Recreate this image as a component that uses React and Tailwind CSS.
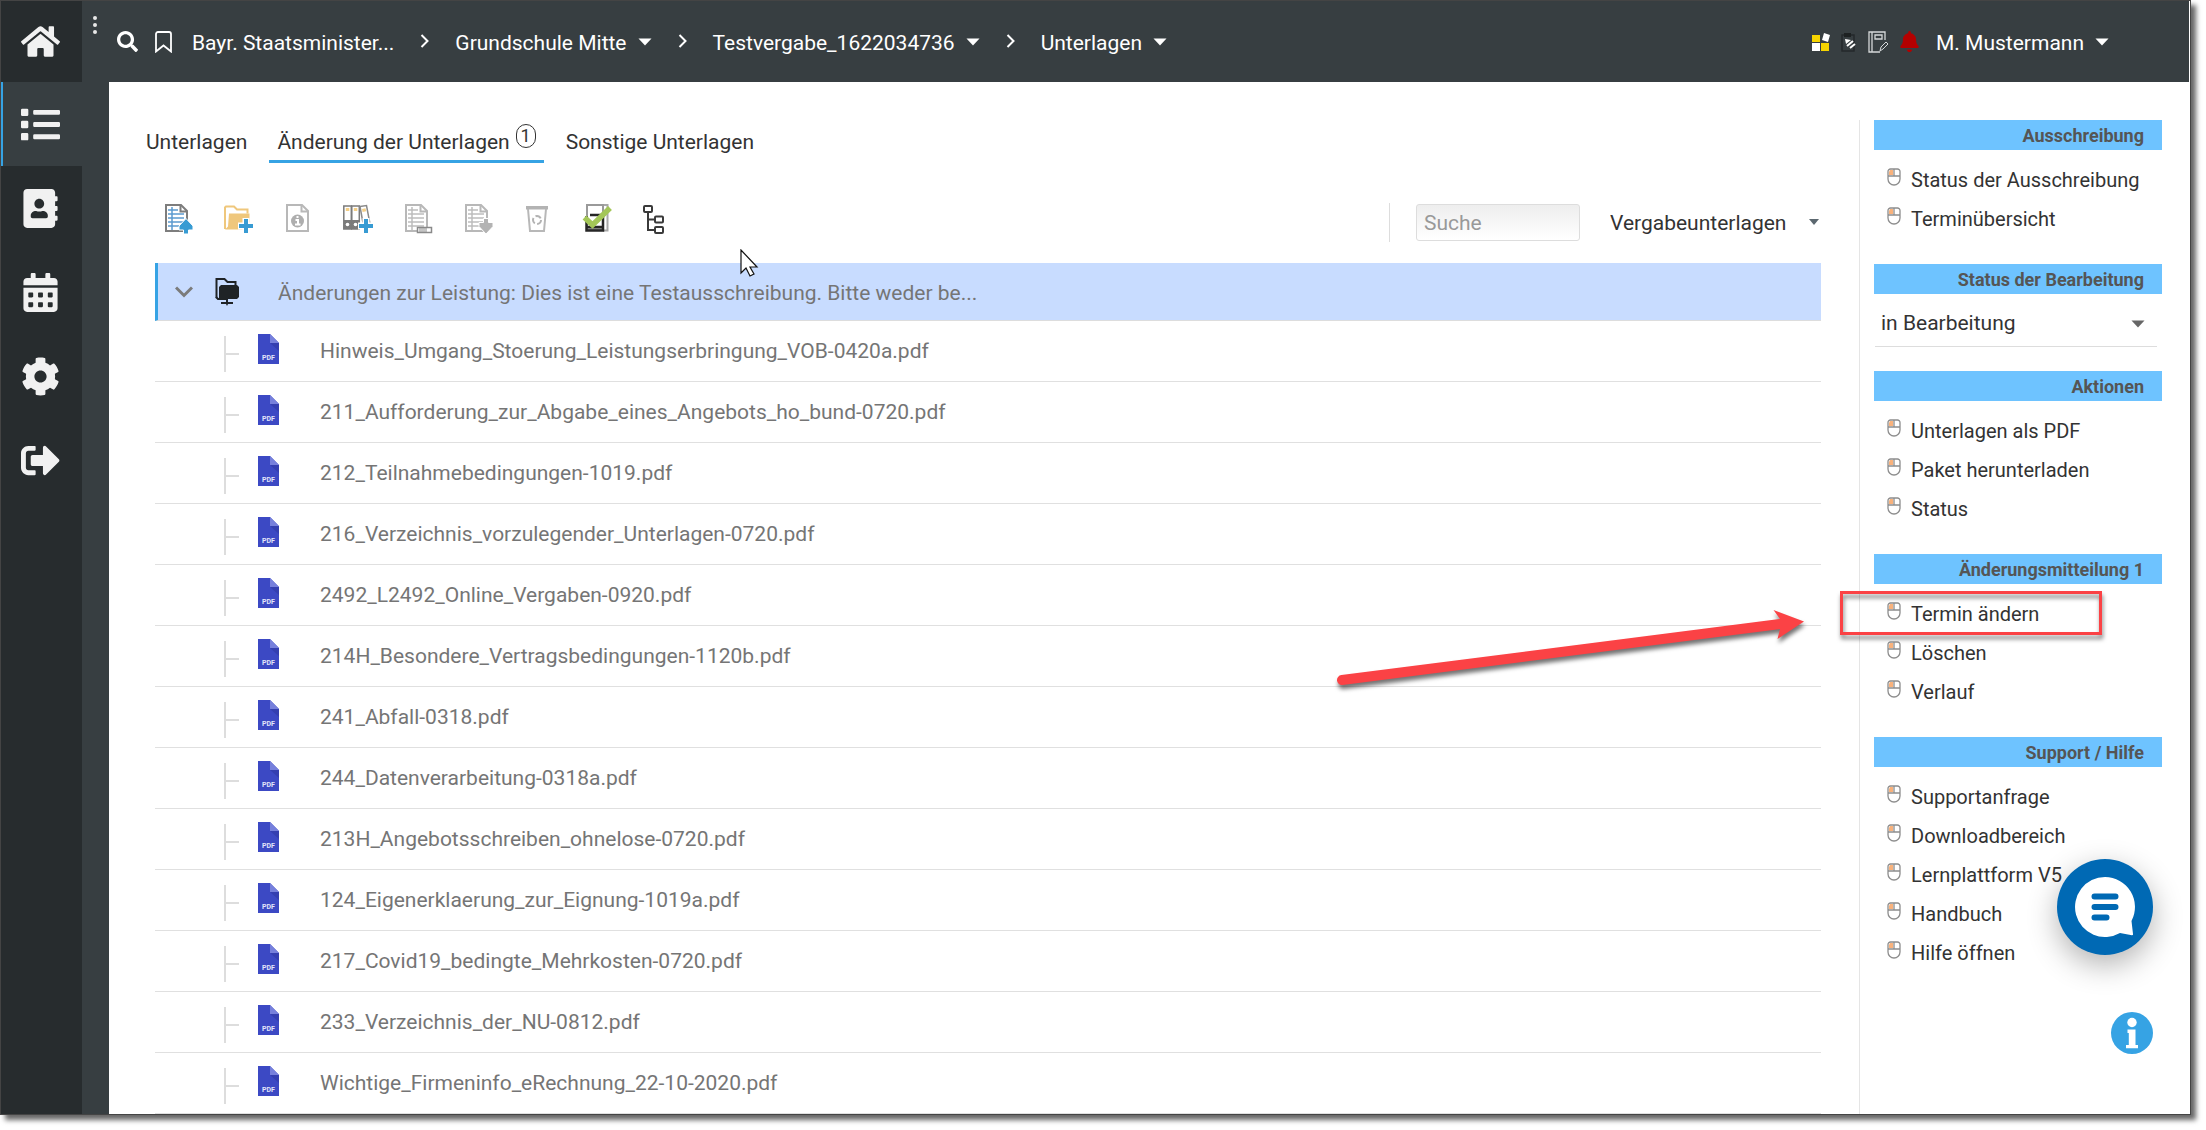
import React from "react";
import {
  FaHome,
  FaList,
  FaAddressBook,
  FaCalendarAlt,
  FaCog,
  FaSignOutAlt,
  FaSearch,
  FaBell,
} from "react-icons/fa";

const navItems = [
  { label: "Start", Icon: FaHome },
  { label: "Liste", Icon: FaList, active: true },
  { label: "Kontakte", Icon: FaAddressBook },
  { label: "Kalender", Icon: FaCalendarAlt },
  { label: "Einstellungen", Icon: FaCog },
  { label: "Abmelden", Icon: FaSignOutAlt },
];

const files = [
  "Hinweis_Umgang_Stoerung_Leistungserbringung_VOB-0420a.pdf",
  "211_Aufforderung_zur_Abgabe_eines_Angebots_ho_bund-0720.pdf",
  "212_Teilnahmebedingungen-1019.pdf",
  "216_Verzeichnis_vorzulegender_Unterlagen-0720.pdf",
  "2492_L2492_Online_Vergaben-0920.pdf",
  "214H_Besondere_Vertragsbedingungen-1120b.pdf",
  "241_Abfall-0318.pdf",
  "244_Datenverarbeitung-0318a.pdf",
  "213H_Angebotsschreiben_ohnelose-0720.pdf",
  "124_Eigenerklaerung_zur_Eignung-1019a.pdf",
  "217_Covid19_bedingte_Mehrkosten-0720.pdf",
  "233_Verzeichnis_der_NU-0812.pdf",
  "Wichtige_Firmeninfo_eRechnung_22-10-2020.pdf",
];

function Caret({ className = "" }) {
  return (
    <svg className={className} width="14" height="8" viewBox="0 0 14 8" aria-hidden="true">
      <path d="M0.5 0.5h13L7 7.5z" fill="currentColor" />
    </svg>
  );
}

function Separator() {
  return (
    <svg width="9" height="14" viewBox="0 0 9 14" fill="none" stroke="white" strokeWidth="2" className="-mt-[4px]" aria-hidden="true">
      <path d="M1.5 1l6 6-6 6" />
    </svg>
  );
}

function PageLines({ stroke, line }) {
  return (
    <g fill="none">
      <path d="M4 4h15l6 6v20H4z" fill="#fff" stroke={stroke} strokeWidth="2" />
      <path d="M18.5 4v6.5H25" stroke={stroke} strokeWidth="2" />
      <path d="M6 9h10M6 13h16M6 17h16M6 21h16M6 25h16M10 6v23" stroke={line} strokeWidth="1.5" />
    </g>
  );
}

function IconFrame({ children }) {
  return (
    <svg width="32" height="34" viewBox="0 0 32 34" aria-hidden="true">
      {children}
    </svg>
  );
}

function Plus() {
  return (
    <g fill="none">
      <path d="M24 17v15M16 25h15" stroke="#fff" strokeWidth="7" />
      <path d="M24 18v14M17 25h14" stroke="#379bd3" strokeWidth="4" />
    </g>
  );
}

function Binder({ x }) {
  return (
    <g>
      <path d={`M${x} 5h7.5v23h-7.5z`} fill="#fff" stroke="#7b7b7b" strokeWidth="1.5" />
      <path d={`M${x} 19h7.5v9h-7.5z`} fill="#7b7b7b" />
      <path d={`M${x + 2} 7h3.5v3h-3.5z`} fill="#f4cf87" />
      <circle cx={x + 3.7} cy="23.5" r="1.8" fill="#fff" />
    </g>
  );
}

const tools = [
  {
    label: "Dokument hochladen",
    icon: (
      <>
        <PageLines stroke="#7d7d7d" line="#5b9bd0" />
        <path d="M24 17.5l7 7.500v4h-4.500v4h-5v-4H17v-4z" fill="#379bd3" stroke="#fff" />
      </>
    ),
  },
  {
    label: "Ordner anlegen",
    icon: (
      <>
        <path d="M3 28V6.500l1-1h8l3 3h10.500v4" fill="none" stroke="#efc77c" strokeWidth="2" />
        <path d="M7 12.500h20.500V27l-1 1.500H3l3-3z" fill="#efc77c" />
        <Plus />
      </>
    ),
  },
  {
    label: "Informationen",
    icon: (
      <>
        <path d="M5 4h15l6 6v20H5z" fill="#fff" stroke="#b8b8b8" strokeWidth="2" />
        <path d="M19.500 4v6.500H26" fill="none" stroke="#b8b8b8" strokeWidth="2" />
        <circle cx="15.500" cy="20" r="6.500" fill="#aeaeae" />
        <path d="M13.500 19h2.500v4M13 23.500h5.500M14.500 16h2" stroke="#fff" strokeWidth="2" fill="none" />
      </>
    ),
  },
  {
    label: "Vergabeordner hinzufügen",
    icon: (
      <>
        <Binder x={1.8} />
        <Binder x={9.8} />
        <path d="M18 5.500l6.500-1 4 21-6.500 2z" fill="#fff" stroke="#8a8a8a" strokeWidth="1.500" />
        <path d="M20 8l3.500-.8.6 3-3.500.8z" fill="#f4cf87" />
        <Plus />
      </>
    ),
  },
  {
    label: "Umbenennen",
    icon: (
      <>
        <PageLines stroke="#b8b8b8" line="#bdbdbd" />
        <path d="M15.500 26.500h14v5h-14z" fill="#fff" stroke="#8a8a8a" strokeWidth="1.500" />
        <path d="M18 27v4M20 27v4M22 27v4M24 27v4" stroke="#8a8a8a" />
      </>
    ),
  },
  {
    label: "Herunterladen",
    icon: (
      <>
        <PageLines stroke="#b8b8b8" line="#bdbdbd" />
        <path d="M24 33l7-7.500v-4h-4.500v-4h-5v4H17v4z" fill="#b3b3b3" stroke="#fff" />
      </>
    ),
  },
  {
    label: "Löschen",
    icon: (
      <>
        <path d="M4 5h22v3.500H4z" fill="#b3b3b3" />
        <path d="M6 8l2 22h14L24 8" fill="none" stroke="#b8b8b8" strokeWidth="2" />
        <circle cx="15" cy="19" r="4" fill="none" stroke="#b3b3b3" strokeWidth="2" strokeDasharray="6 2.400" />
      </>
    ),
  },
  {
    label: "Prüfen",
    icon: (
      <>
        <path d="M20 4h5.500v25.500H21" fill="none" stroke="#a8a8a8" strokeWidth="2" />
        <path d="M5 28V4h16v24z" fill="#fff" stroke="#9a9a9a" strokeWidth="2" />
        <path d="M4.500 15v14.500H21V15M8 14h11M5 26h16" fill="none" stroke="#262626" strokeWidth="2.500" />
        <path d="M2.500 16.500l8 7.500L28 7" fill="none" stroke="#a3c658" strokeWidth="5.500" />
      </>
    ),
  },
  {
    label: "Struktur",
    icon: (
      <g fill="none" stroke="#3a3a3a" strokeWidth="2">
        <rect x="2" y="5" width="8" height="6" rx="1" />
        <rect x="13" y="15.500" width="8" height="6" rx="1" />
        <rect x="13" y="26" width="8" height="6" rx="1" />
        <path d="M6 11v18h7M6 18.500h7" />
      </g>
    ),
  },
];

function MouseIcon() {
  return (
    <svg width="14" height="18" viewBox="0 0 14 18" fill="none" className="-mt-[5px] shrink-0" aria-hidden="true">
      <path d="M3 2h3v5H2V4z" fill="#f9b27c" />
      <path
        d="M3.500 1h7A2.500 2.500 0 0 1 13 3.500V11a6 6 0 0 1-12 0V3.500A2.500 2.500 0 0 1 3.500 1zM1 8h12M7 1.500V8"
        stroke="#8d8d8d"
        strokeWidth="1.300"
      />
    </svg>
  );
}

function PdfIcon() {
  return (
    <svg width="21" height="30" viewBox="0 0 21 30" className="-mt-1 shrink-0" aria-hidden="true">
      <path d="M0 0h12l9 9v21H0z" fill="#3c49c4" />
      <path d="M12 9h9v8z" fill="#343fb0" />
      <path d="M12 0l9 9h-9z" fill="#7680dc" />
      <text x="10.500" y="25.500" textAnchor="middle" fontSize="7" fontWeight="700" fill="#e3e5fa">
        PDF
      </text>
    </svg>
  );
}

function Crumb({ children, menu }) {
  return (
    <button type="button" className="flex items-center gap-[11px] whitespace-nowrap">
      {children}
      {menu && <Caret className="-mt-[2px]" />}
    </button>
  );
}

function Group({ title, children }) {
  return (
    <section className="mb-[24px]">
      <h2 className="h-[30px] bg-[#6ec3ff] pr-[18px] text-right text-[18px] leading-8 font-bold text-[#555]">
        {title}
      </h2>
      {children}
    </section>
  );
}

function Links({ items, marked }) {
  return (
    <ul className="mt-[10px] mb-[26px] text-[20px]">
      {items.map((item) => (
        <li key={item} className="relative flex h-[39px] items-center">
          <a href="#" className="flex items-center gap-[10px] pl-[13px] whitespace-nowrap">
            <MouseIcon />
            {item}
          </a>
          {item === marked && (
            <span className="pointer-events-none absolute top-[-3px] -left-[34px] h-[44px] w-[262px] border-[3px] border-[#fb4245] drop-shadow-[1px_4px_2px_rgba(0,0,0,0.5)]" />
          )}
        </li>
      ))}
    </ul>
  );
}

export default function App() {
  return (
    <div className="flex min-h-screen flex-col bg-white pr-[15px] pb-[15px] font-[Roboto,sans-serif] text-[21px] leading-6 text-[#333]">
      <div className="relative flex flex-1 border border-[#444] shadow-[5px_5px_5px_rgba(0,0,0,0.6)]">
        <nav className="w-[81px] shrink-0 bg-[#272c2e] text-[#f1f1f1]">
          {navItems.map(({ label, Icon, active }, i) => (
            <a
              key={label}
              href="#"
              aria-label={label}
              className={
                active
                  ? "flex h-[84px] items-center justify-center border-l-2 border-[#36a3e4] bg-[#373e41] pr-1"
                  : i === 0
                    ? "flex h-[81px] items-center justify-center pr-0.5"
                    : "flex h-[84px] items-center justify-center pr-0.5"
              }
            >
              <Icon size={39} />
            </a>
          ))}
        </nav>

        <div className="flex min-w-0 flex-1 flex-col bg-[#373e41]">
          <header className="flex h-[81px] items-center border-r border-white pr-[80px] pl-[11px] text-white">
            <svg width="4" height="18" viewBox="0 0 4 18" className="mb-[34px]" fill="#e8e8e8" aria-hidden="true">
              <circle cx="2" cy="2" r="2" />
              <circle cx="2" cy="9" r="2" />
              <circle cx="2" cy="16" r="2" />
            </svg>
            <button type="button" aria-label="Suchen" className="ml-[20px]">
              <FaSearch size={21} />
            </button>
            <button type="button" aria-label="Lesezeichen" className="ml-[17px]">
              <svg width="17" height="22" viewBox="0 0 17 22" fill="none" stroke="white" strokeWidth="1.800">
                <path d="M1 3a2 2 0 0 1 2-2h11a2 2 0 0 1 2 2v17.500l-7.500-6-7.500 6z" />
              </svg>
            </button>
            <div className="ml-[20px] flex flex-1 items-center gap-[26px] pt-[2px]">
              <Crumb>Bayr. Staatsminister...</Crumb>
              <Separator />
              <Crumb menu>Grundschule Mitte</Crumb>
              <Separator />
              <Crumb menu>Testvergabe_1622034736</Crumb>
              <Separator />
              <Crumb menu>Unterlagen</Crumb>
            </div>
            <div className="flex items-center gap-[11px]">
              <svg width="18" height="18" viewBox="0 0 18 18" aria-hidden="true">
                <path d="M0 2h8v7H0z" fill="#f6d400" />
                <path d="M0 10h8v8H0zM12 0l6 2-2 7-6-2z" fill="#fff" />
                <path d="M9 10h8v8H9z" fill="#f6d400" />
              </svg>
              <svg width="16" height="20" viewBox="0 0 16 20" aria-hidden="true">
                <path d="M1 3h12v16H1z" fill="none" stroke="#25292b" strokeWidth="1.500" />
                <path d="M3 1h7v4H3z" fill="#1d2122" />
                <path d="M4 7l6 1-5 4z" fill="#fff" />
                <path d="M6 14l6-5M9 16l5-4" stroke="#fff" strokeWidth="2" />
              </svg>
              <svg width="20" height="22" viewBox="0 0 20 22" fill="none" stroke="#d5d8d9" aria-hidden="true">
                <path d="M17 9V1H1v20h11M4 1v20M7 4h7v4H7z" strokeWidth="1.300" />
                <path d="M12 20l1-4 5-5 2 2-5 5z" />
              </svg>
              <FaBell size={21} color="#b40000" />
            </div>
            <button type="button" className="ml-[16px] flex items-center gap-[11px] pt-[2px]">
              M. Mustermann
              <Caret className="-mt-[2px]" />
            </button>
          </header>

          <div className="ml-[27px] flex flex-1 bg-white">
            <main className="min-w-0 flex-1 pt-[38px] pr-[38px] pl-[29px]">
              <div role="tablist" className="flex h-[43px] gap-[14px]">
                <button type="button" role="tab" aria-selected="false" className="px-2">
                  Unterlagen
                </button>
                <button
                  type="button"
                  role="tab"
                  aria-selected="true"
                  className="flex items-center gap-[6px] border-b-[3px] border-[#36a3e4] px-2 pt-[3px]"
                >
                  Änderung der Unterlagen
                  <span className="mb-[12px] h-[24px] w-[20px] rounded-full border border-[#333] text-center text-[18px] leading-[22px]">
                    1
                  </span>
                </button>
                <button type="button" role="tab" aria-selected="false" className="px-2">
                  Sonstige Unterlagen
                </button>
              </div>

              <div className="relative mt-[40px] ml-[17px] flex h-[39px] items-center">
                <div className="mb-[10px] flex flex-1 gap-[28px] pl-[7px]">
                  {tools.map((tool) => (
                    <button key={tool.label} type="button" aria-label={tool.label}>
                      <IconFrame>{tool.icon}</IconFrame>
                    </button>
                  ))}
                </div>
                <div className="flex h-full items-center border-l border-[#ddd] pl-[26px]">
                  <input
                    type="text"
                    aria-label="Suche"
                    placeholder="Suche"
                    className="h-[37px] w-[164px] rounded-[3px] border border-[#ddd] bg-linear-to-b from-[#eee] to-white px-[7px] placeholder:text-[#999]"
                  />
                  <div className="relative ml-[30px]">
                    <select aria-label="Bereich" className="w-[211px] appearance-none">
                      <option>Vergabeunterlagen</option>
                    </select>
                    <svg
                      width="10"
                      height="6"
                      viewBox="0 0 10 6"
                      className="pointer-events-none absolute top-[8px] right-[2px]"
                      aria-hidden="true"
                    >
                      <path d="M0 0h10L5 6z" fill="#5c6870" />
                    </svg>
                  </div>
                </div>
                <svg
                  width="19"
                  height="29"
                  viewBox="0 0 19 29"
                  className="pointer-events-none absolute top-[46px] left-[585px] z-10"
                  aria-hidden="true"
                >
                  <path d="M1 1v23l5-5 4 8 4-2-4-7h7z" fill="#fff" stroke="#111" strokeWidth="1.200" />
                </svg>
              </div>

              <div className="relative mt-[21px] ml-[17px] text-[#757575]">
                <div className="flex h-[58px] items-center border-b border-l-[3px] border-b-[#ddd] border-l-[#36a3e4] bg-[#c8dcff] pl-[17px]">
                  <button type="button" aria-label="Zuklappen">
                    <svg width="18" height="12" viewBox="0 0 18 12" fill="none" stroke="#7b7b7b" strokeWidth="3">
                      <path d="M1 1.500l8 8 8-8" />
                    </svg>
                  </button>
                  <svg width="24" height="30" viewBox="0 0 24 30" className="ml-[22px]" aria-hidden="true">
                    <path d="M1.500 21V2h8l3 3h8v4" fill="none" stroke="#1f2326" strokeWidth="2" />
                    <path d="M4 22V10l2-2h16l2 2v10l-2 2z" fill="#1f2326" />
                    <path d="M1 20l2 2h8" fill="none" stroke="#1f2326" strokeWidth="2" />
                    <path d="M11 21h2v4h5v2h-5l-1 2-1-2H6v-2h5z" fill="#1f2326" />
                  </svg>
                  <span className="ml-[39px] pt-[3px]">
                    Änderungen zur Leistung: Dies ist eine Testausschreibung. Bitte weder be...
                  </span>
                </div>
                <ul>
                  {files.map((file) => (
                    <li key={file} className="flex h-[61px] items-center border-b border-[#e0e0e0] pl-[69px]">
                      <svg width="15" height="36" viewBox="0 0 15 36" className="mt-[5px]" aria-hidden="true">
                        <path d="M1 0v36M1 18h14" stroke="#ddd" strokeWidth="2" fill="none" />
                      </svg>
                      <a href="#" className="ml-[19px] flex items-center gap-[41px]">
                        <PdfIcon />
                        {file}
                      </a>
                    </li>
                  ))}
                </ul>
                <svg
                  width="490"
                  height="100"
                  viewBox="-10 0 490 100"
                  className="pointer-events-none absolute top-[337px] right-0 drop-shadow-[1px_4px_2px_rgba(0,0,0,0.55)]"
                  aria-hidden="true"
                >
                  <path d="M1 80L439 24" stroke="#fb4245" strokeWidth="10" strokeLinecap="round" />
                  <path d="M432.500 10L463 21.500L436.500 39L439 29V19z" fill="#fb4245" />
                </svg>
              </div>
            </main>

            <aside className="mt-[38px] w-[331px] shrink-0 border-l border-[#e5e5e5] pr-[28px] pl-[14px]">
              <Group title="Ausschreibung">
                <Links items={["Status der Ausschreibung", "Terminübersicht"]} />
              </Group>
              <Group title="Status der Bearbeitung">
                <div className="relative mr-[5px] ml-px border-b border-[#ddd] pt-[6px]">
                  <select aria-label="Status der Bearbeitung" className="h-[46px] w-full appearance-none pl-[6px]">
                    <option>in Bearbeitung</option>
                  </select>
                  <Caret className="pointer-events-none absolute top-[26px] right-[12px] text-[#666]" />
                </div>
              </Group>
              <Group title="Aktionen">
                <Links items={["Unterlagen als PDF", "Paket herunterladen", "Status"]} />
              </Group>
              <Group title="Änderungsmitteilung 1">
                <Links items={["Termin ändern", "Löschen", "Verlauf"]} marked="Termin ändern" />
              </Group>
              <Group title="Support / Hilfe">
                <Links
                  items={["Supportanfrage", "Downloadbereich", "Lernplattform V5", "Handbuch", "Hilfe öffnen"]}
                />
              </Group>
            </aside>
          </div>
        </div>

        <button
          type="button"
          aria-label="Chat öffnen"
          className="absolute right-[37px] bottom-[159px] flex size-[96px] items-center justify-center rounded-full bg-[#0069b4] shadow-[0_10px_30px_rgba(0,0,0,0.3)]"
        >
          <svg width="60" height="60" viewBox="0 0 60 60" aria-hidden="true">
            <path
              d="M30 0a30 30 0 0 1 26.500 44L58 57c.2 1-.5 1.300-1 1.200L45 56A30 30 0 1 1 30 0z"
              fill="#fff"
            />
            <path d="M19.500 19.500h21M19.500 30h21M19.500 40.500h12" stroke="#0069b4" strokeWidth="6" strokeLinecap="round" />
          </svg>
        </button>
        <button type="button" aria-label="Information" className="absolute right-[37px] bottom-[60px] size-[42px]">
          <svg width="42" height="42" viewBox="0 0 42 42" aria-hidden="true">
            <circle cx="21" cy="21" r="21" fill="#36a3e4" />
            <circle cx="21" cy="10.500" r="4.700" fill="#fff" />
            <path d="M16.500 17.500h8v15.500H27v3.300H15V33h2.800V21h-1.300z" fill="#fff" />
          </svg>
        </button>
      </div>
    </div>
  );
}
